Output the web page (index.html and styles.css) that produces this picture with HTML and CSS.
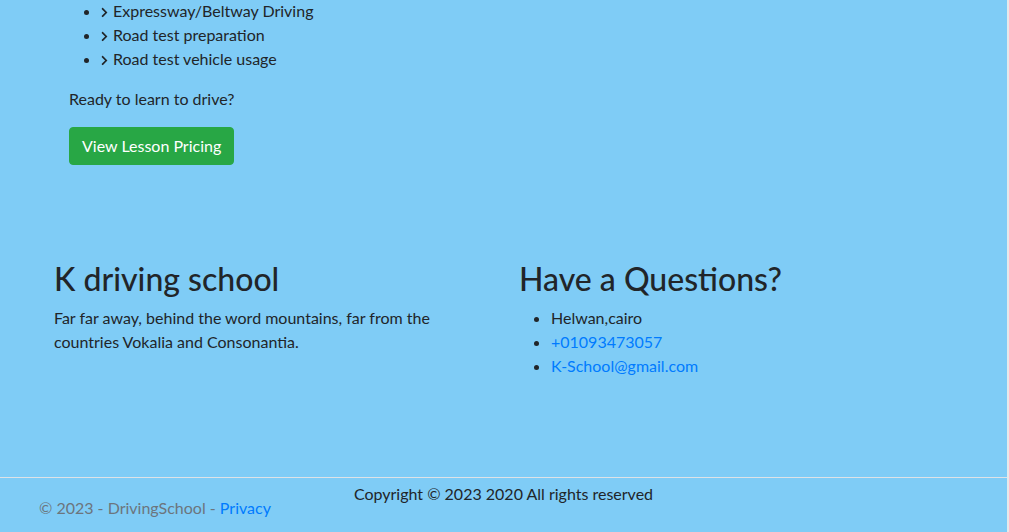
FILE: index.html
```html
<!DOCTYPE html>
<html lang="en">
<head>
<meta charset="utf-8">
<title>DrivingSchool</title>
<link rel="stylesheet" href="styles.css">
</head>
<body>
<main class="page">
  <section class="lesson">
    <ul class="features">
      <li><svg class="chev" viewBox="0 0 320 512" width="7" height="11"><path d="M285.476 272.971L91.132 467.314c-9.373 9.373-24.569 9.373-33.941 0l-22.667-22.667c-9.357-9.357-9.375-24.522-.04-33.901L188.505 256 34.484 101.255c-9.335-9.379-9.317-24.544.04-33.901l22.667-22.667c9.373-9.373 24.569-9.373 33.941 0L285.475 239.03c9.373 9.372 9.373 24.568.001 33.941z"/></svg>Expressway/Beltway Driving</li>
      <li><svg class="chev" viewBox="0 0 320 512" width="7" height="11"><path d="M285.476 272.971L91.132 467.314c-9.373 9.373-24.569 9.373-33.941 0l-22.667-22.667c-9.357-9.357-9.375-24.522-.04-33.901L188.505 256 34.484 101.255c-9.335-9.379-9.317-24.544.04-33.901l22.667-22.667c9.373-9.373 24.569-9.373 33.941 0L285.475 239.03c9.373 9.372 9.373 24.568.001 33.941z"/></svg>Road test preparation</li>
      <li><svg class="chev" viewBox="0 0 320 512" width="7" height="11"><path d="M285.476 272.971L91.132 467.314c-9.373 9.373-24.569 9.373-33.941 0l-22.667-22.667c-9.357-9.357-9.375-24.522-.04-33.901L188.505 256 34.484 101.255c-9.335-9.379-9.317-24.544.04-33.901l22.667-22.667c9.373-9.373 24.569-9.373 33.941 0L285.475 239.03c9.373 9.372 9.373 24.568.001 33.941z"/></svg>Road test vehicle usage</li>
    </ul>
    <p class="ready">Ready to learn to drive?</p>
    <a class="btn-success" href="#">View Lesson Pricing</a>
  </section>

  <section class="info">
    <div class="info-col">
      <h2>K driving school</h2>
      <p class="about">Far far away, behind the word mountains, far from the countries Vokalia and Consonantia.</p>
    </div>
    <div class="info-col">
      <h2>Have a Questions?</h2>
      <ul class="contact">
        <li>Helwan,cairo</li>
        <li><a href="#">+01093473057</a></li>
        <li><a href="#">K-School@gmail.com</a></li>
      </ul>
    </div>
  </section>

  <footer class="site-footer">
    <div class="muted">&copy; 2023 - DrivingSchool - <a href="#">Privacy</a></div>
    <p class="copyright">Copyright &copy; 2023 2020 All rights reserved</p>
    <div></div>
  </footer>
</main>
</body>
</html>
```
FILE: styles.css
```css
html {
  background: #e6e8ea;
}
body {
  margin: 0 2px 0 0;
  background: #7fccf6;
  font-family: Lato, "Segoe UI", sans-serif;
  font-size: 16px;
  line-height: 24px;
  color: #212529;
  height: 532px;
  overflow: hidden;
}
a {
  color: #007bff;
  text-decoration: none;
}
.page {
  display: flex;
  flex-direction: column;
}

/* top lesson block */
.lesson {
  padding-left: 69px;
  margin-top: -1px;
}
.features {
  margin: 0;
  padding-left: 32px;
}
.features li {
  height: 24px;
}
.chev {
  fill: #212529;
  margin-right: 5px;
  vertical-align: -1px;
}
.ready {
  margin: 16px 0 16px;
}
.btn-success {
  display: inline-block;
  background: #28a745;
  border: 1px solid #28a745;
  border-radius: 4px;
  color: #fff;
  padding: 6px 12px 5px;
  line-height: 24px;
  height: 38px;
  box-sizing: border-box;
}

/* info columns */
.info {
  display: grid;
  grid-template-columns: 465px 1fr;
  padding-left: 54px;
  margin-top: 95px;
  height: 217px;
}
.info h2 {
  margin: 0 0 8px;
  font-size: 32px;
  line-height: 38px;
  font-weight: 500;
}
.about {
  margin: 0;
  max-width: 420px;
}
.contact {
  margin: 0;
  padding-left: 32px;
}

/* footer */
.site-footer {
  border-top: 1px solid #dee2e6;
  display: grid;
  grid-template-columns: 1fr auto 1fr;
  align-items: start;
  height: 54px;
}
.muted {
  color: #6c757d;
  padding: 18px 0 0 39px;
  white-space: nowrap;
}
.copyright {
  margin: 4px 0 0;
}
```
